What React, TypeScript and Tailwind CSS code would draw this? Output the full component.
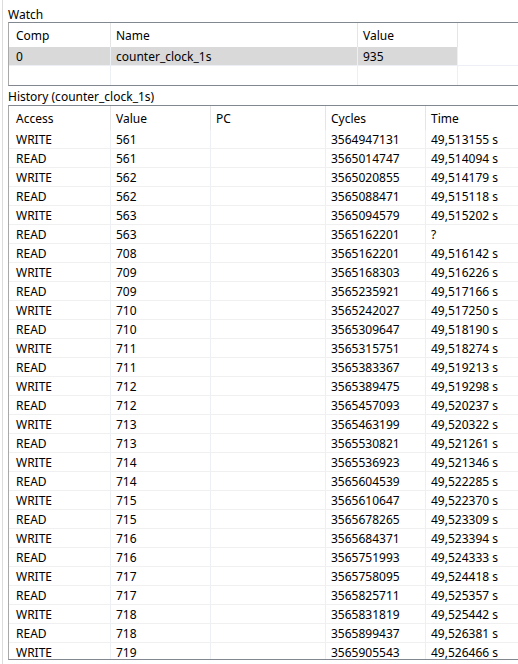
const ROWS: [string, string, string, string][] = [
  ['WRITE', '561', '3564947131', '49,513155 s'],
  ['READ', '561', '3565014747', '49,514094 s'],
  ['WRITE', '562', '3565020855', '49,514179 s'],
  ['READ', '562', '3565088471', '49,515118 s'],
  ['WRITE', '563', '3565094579', '49,515202 s'],
  ['READ', '563', '3565162201', '?'],
  ['READ', '708', '3565162201', '49,516142 s'],
  ['WRITE', '709', '3565168303', '49,516226 s'],
  ['READ', '709', '3565235921', '49,517166 s'],
  ['WRITE', '710', '3565242027', '49,517250 s'],
  ['READ', '710', '3565309647', '49,518190 s'],
  ['WRITE', '711', '3565315751', '49,518274 s'],
  ['READ', '711', '3565383367', '49,519213 s'],
  ['WRITE', '712', '3565389475', '49,519298 s'],
  ['READ', '712', '3565457093', '49,520237 s'],
  ['WRITE', '713', '3565463199', '49,520322 s'],
  ['READ', '713', '3565530821', '49,521261 s'],
  ['WRITE', '714', '3565536923', '49,521346 s'],
  ['READ', '714', '3565604539', '49,522285 s'],
  ['WRITE', '715', '3565610647', '49,522370 s'],
  ['READ', '715', '3565678265', '49,523309 s'],
  ['WRITE', '716', '3565684371', '49,523394 s'],
  ['READ', '716', '3565751993', '49,524333 s'],
  ['WRITE', '717', '3565758095', '49,524418 s'],
  ['READ', '717', '3565825711', '49,525357 s'],
  ['WRITE', '718', '3565831819', '49,525442 s'],
  ['READ', '718', '3565899437', '49,526381 s'],
  ['WRITE', '719', '3565905543', '49,526466 s'],
];

// header cell with light divider on the right
function Head({ w, first, children }: { w: string; first?: boolean; children: React.ReactNode }) {
  return (
    <div className={`${w} shrink-0 flex h-full items-center pt-px border-r border-[#e5e5e5] ${first ? 'pl-[7px]' : 'pl-[5px]'}`}>
      {children}
    </div>
  );
}

function Cell({ w, first, children }: { w: string; first?: boolean; children?: React.ReactNode }) {
  return (
    <div className={`${w} shrink-0 flex h-full items-center pt-[2px] border-r border-[#eceff4] ${first ? 'pl-[7px]' : 'pl-[5px]'}`}>
      {children}
    </div>
  );
}

export default function App() {
  return (
    <div
      className="relative h-[664px] w-[518px] overflow-hidden bg-white text-[12px] text-black"
      style={{ fontFamily: '"Segoe UI", "Noto Sans", sans-serif' }}
    >
      <div className="absolute left-[2px] top-0 h-full w-px bg-[#dcdcdc]" />

      {/* Watch */}
      <div className="h-[22px] pl-[8px] pt-[7px] leading-[15px]">Watch</div>
      <div className="ml-[8px] h-[64px] w-[520px] border border-r-0 border-[#828790] border-l-[#a9a9a9]">
        <div className="flex h-[24px]">
          <Head w="w-[102px]" first>Comp</Head>
          <Head w="w-[247px]">Name</Head>
          <Head w="w-[100px]">Value</Head>
        </div>
        <div className="flex h-[19px] border-b border-[#eceff4]">
          <div className="flex h-full w-[449px] shrink-0 bg-[#d9d9d9]">
            <Cell w="w-[102px]" first>0</Cell>
            <Cell w="w-[247px]">counter_clock_1s</Cell>
            <Cell w="w-[100px]">935</Cell>
          </div>
        </div>
        <div className="flex h-[19px]">
          <Cell w="w-[102px]" first />
          <Cell w="w-[247px]" />
          <Cell w="w-[100px]" />
        </div>
      </div>

      {/* History */}
      <div className="h-[19px] pl-[8px] pt-[4px] leading-[14px]">History (counter_clock_1s)</div>
      <div className="ml-[8px] h-[555px] w-[520px] overflow-hidden border border-r-0 border-[#828790] border-l-[#a9a9a9]">
        <div className="flex h-[24px]">
          <Head w="w-[102px]" first>Access</Head>
          <Head w="w-[100px]">Value</Head>
          <Head w="w-[115px]">PC</Head>
          <Head w="w-[100px]">Cycles</Head>
          <div className="flex h-full shrink-0 items-center pl-[5px] pt-px">Time</div>
        </div>
        {ROWS.map((r, i) => (
          <div key={i} className="flex h-[19px] border-b border-[#f0f0f0]">
            <Cell w="w-[102px]" first>{r[0]}</Cell>
            <Cell w="w-[100px]">{r[1]}</Cell>
            <Cell w="w-[115px]" />
            <Cell w="w-[100px]">{r[2]}</Cell>
            <div className="flex h-full shrink-0 items-center pl-[5px] pt-[2px]">{r[3]}</div>
          </div>
        ))}
      </div>
    </div>
  );
}
